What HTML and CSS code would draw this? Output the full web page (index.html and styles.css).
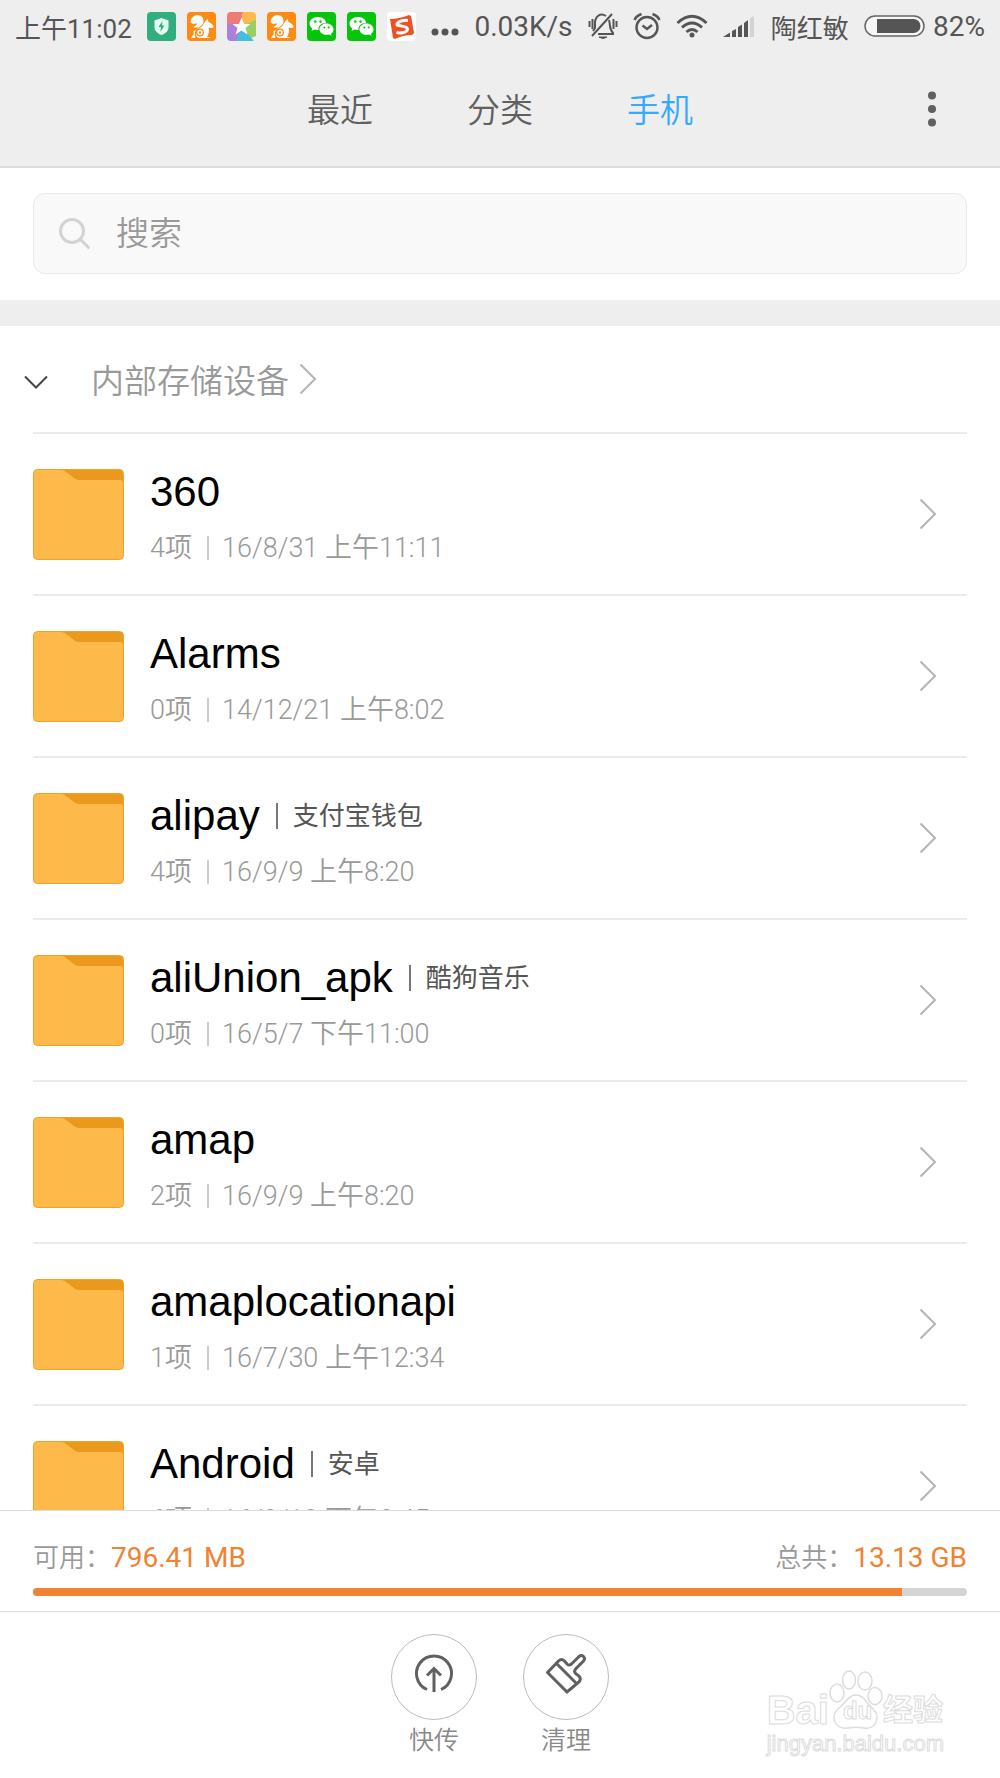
FILE: index.html
```html
<!DOCTYPE html>
<html lang="zh-CN">
  <head>
    <meta charset="UTF-8" />
    <meta name="viewport" content="width=device-width, initial-scale=1.0" />
    <title>文件管理</title>
    <link rel="stylesheet" href="styles.css" />
  </head>
  <body>
    <!-- shared icons -->
    <svg class="sprite" aria-hidden="true">
      <symbol id="folder" viewBox="0 0 91 91">
        <rect x="0.5" y="0.5" width="90" height="90" rx="4" fill="#fdba4a" stroke="#efa22b" />
        <path d="M28 1H87q3 0 3 3V14q0-3-3-3H46q-3 0-5-2L33 3q-2-2-5-2z" fill="#ea991c" />
      </symbol>
      <symbol id="chevron" viewBox="0 0 18 32">
        <path d="M1.500 1.500 16 16 1.500 30.500" fill="none" stroke="#b4b4b4" stroke-width="2" />
      </symbol>
      <symbol id="uc" viewBox="0 0 29 29">
        <rect width="29" height="29" rx="4" fill="#ff8a12" />
        <path d="M3.500 10C4 6 7 3 10.500 3c4 0 6.500 3 6 7-.5 3.500-5 5-7.500 8-1.500 2-1.500 5-.5 8H4c2-2 3.500-5 2.500-7 2-.5 4-2 4.500-4-1.500 1-4 1-5 0 2-.5 4-2 4-4-2 1.500-5 1-6.500-1z" fill="#fff" />
        <path d="M20.500 7l1 3c3 1 5 3 5 5-1 1.500-3 1-5 .5 0 1 1 2.500.5 4.500-.5 2-1 3-2 4.500l4 1.500H13c-4 0-5-4-3.500-6.500C11 16 14 16 16 13c1.500-2.500 2.500-4 4.500-6z" fill="#fff" />
        <circle cx="13" cy="20.500" r="3.300" fill="none" stroke="#ff8a12" stroke-width="1.300" />
        <circle cx="13" cy="20.500" r="1.200" fill="#ff8a12" />
      </symbol>
      <symbol id="wechat" viewBox="0 0 29 29">
        <rect width="29" height="29" rx="4" fill="#06c40b" />
        <path d="M11 5c5 0 8 3 8 6-5 0-8 3-7.500 7-1.500.2-3-.1-4-.4L4.500 19l.8-2.500C3.500 15 2.500 13.500 2.500 11.700 2.500 8 6 5 11 5z" fill="#fff" />
        <path d="M19.500 11.500c4 0 7 2.600 7 5.700 0 2-1 3.500-2.500 4.500l.6 2-2.300-1.200c-6 1.300-9.800-1.800-9.800-5.300 0-3.100 3-5.700 7-5.700z" fill="#fff" />
        <g fill="#06c40b">
          <circle cx="8.300" cy="9.500" r="1.200" /><circle cx="13.500" cy="9.500" r="1.200" />
          <circle cx="17.300" cy="15.500" r="1" /><circle cx="21.700" cy="15.500" r="1" />
        </g>
      </symbol>
    </svg>

    <main>
      <header>
        <div class="statusbar">
          <span class="time">上午11:02</span>
          <div class="apps">
            <svg viewBox="0 0 29 29">
              <rect width="29" height="29" rx="4" fill="#32ae7e" />
              <path d="M14.500 6 21.500 8.500V15c0 4-3 6.500-7 8-4-1.500-7-4-7-8V8.500z" fill="#e4fff2" />
              <path d="M15.500 9 11.500 15h2.500l-.7 5 4.200-6.500H15z" fill="#32ae7e" />
            </svg>
            <svg><use href="#uc" /></svg>
            <svg viewBox="0 0 29 29">
              <clipPath id="tile"><rect width="29" height="29" rx="4" /></clipPath>
              <g clip-path="url(#tile)">
                <path d="M0 0H16L14 14 0 12z" fill="#ef7b78" />
                <path d="M16 0H29V9L14 14z" fill="#fcb94d" />
                <path d="M29 8V24L24 26 14 14z" fill="#98cf60" />
                <path d="M27 29H7L14 14z" fill="#45bddd" />
                <path d="M0 11 14 14 9 29H0z" fill="#ae7fd9" />
              </g>
              <path d="M14.500 5.500 17 12h6.500l-5 4 2 6.500-6-4-6 4 2-6.500-5-4H12z" fill="#fff" />
            </svg>
            <svg><use href="#uc" /></svg>
            <svg><use href="#wechat" /></svg>
            <svg><use href="#wechat" /></svg>
            <svg viewBox="0 0 29 29">
              <rect width="29" height="29" rx="4" fill="#fff" />
              <path d="M3 7q9 0 19-4l2 1 3 17-2 2q-9 0-17 4l-2-1z" fill="#ee4f23" />
              <path d="M21 8.500c-4-.5-10 .5-11 3.500-.7 3 10 1 10.500 5 .3 3.500-7 4.500-11 3.500" fill="none" stroke="#fff" stroke-width="3" />
            </svg>
          </div>
          <svg class="more-apps" viewBox="0 0 28 8" fill="#555">
            <circle cx="4" cy="4" r="3.500" /><circle cx="14" cy="4" r="3.500" /><circle cx="24" cy="4" r="3.500" />
          </svg>
          <span class="speed">0.03K/s</span>
          <svg class="mute" viewBox="0 0 30 28" fill="none" stroke="#555" stroke-width="2">
            <path d="M24 2 4 24M18 4c-6-4-11 1-11 7v5l-2 3M21 8c1.500 5 0 9 4 13v1H10" />
            <path d="M1.500 9v6M4.500 7v10M25.500 7v10M28.500 9v6" />
            <path d="M11 25h8q-4 3-8 0z" fill="#555" stroke-width="1" />
          </svg>
          <svg class="alarm" viewBox="0 0 28 28" fill="none" stroke="#555" stroke-width="2.400">
            <circle cx="14" cy="15.500" r="10.500" />
            <path d="M9.500 13.500 14 17l5-4M1.500 8Q3 4 8.500 2M26.500 8Q25 4 19.500 2" />
          </svg>
          <svg class="wifi" viewBox="0 0 32 24" fill="none" stroke="#555" stroke-width="3">
            <path d="M1.500 9Q16-4.500 30.500 9M6 13.500Q16 4.500 26 13.500M10.500 18Q16 13 21.500 18" />
            <circle cx="16" cy="21" r="2.500" fill="#555" stroke="none" />
          </svg>
          <svg class="signal" viewBox="0 0 32 22" fill="#555">
            <path d="M0 22 7 17.500V22zM9 16l4-2V22H9zM15 12l4-2.500V22H15zM21 8l4-3V22H21z" />
            <path d="M27 3l4-2V22H27z" fill="#d3d3d3" />
          </svg>
          <span class="carrier">陶红敏</span>
          <div class="power">
            <svg class="battery" viewBox="0 0 61 22">
              <rect x="1" y="1" width="59" height="20" rx="10" fill="#f6f6f6" stroke="#666" stroke-width="1.500" />
              <path d="M13 4H49.500a7 7 0 0 1 0 14H13z" fill="#555" />
            </svg>
            <span>82%</span>
          </div>
        </div>
        <nav>
          <button class="tab">最近</button>
          <button class="tab">分类</button>
          <button class="tab valgt">手机</button>
          <button class="menu" aria-label="更多">
            <svg viewBox="0 0 8 36" fill="#606060">
              <circle cx="4" cy="4.500" r="4" /><circle cx="4" cy="18" r="4" /><circle cx="4" cy="31.500" r="4" />
            </svg>
          </button>
        </nav>
      </header>

      <section class="search">
        <label class="search-box">
          <svg viewBox="0 0 32 32" fill="none" stroke="#d3d3d3" stroke-width="3">
            <circle cx="13" cy="13" r="11.500" />
            <path d="M21 21 29.500 29.500" stroke-linecap="round" />
          </svg>
          <input type="text" placeholder="搜索" aria-label="搜索" />
        </label>
      </section>

      <section class="files">
        <div class="path">
          <button class="toggle" aria-label="展开">
            <svg viewBox="0 0 24 14"><path d="M1 1.500 12 12.500 23 1.500" fill="none" stroke="#444" stroke-width="2" /></svg>
          </button>
          <a href="#">内部存储设备 <svg class="chevron"><use href="#chevron" /></svg></a>
        </div>
        <ul class="liste">
          <li>
            <a href="#">
              <svg class="folder"><use href="#folder" /></svg>
              <div class="info">
                <h3>360</h3>
                <p><span>4项</span><span>16/8/31 上午11:11</span></p>
              </div>
              <svg class="chevron"><use href="#chevron" /></svg>
            </a>
          </li>
          <li>
            <a href="#">
              <svg class="folder"><use href="#folder" /></svg>
              <div class="info">
                <h3>Alarms</h3>
                <p><span>0项</span><span>14/12/21 上午8:02</span></p>
              </div>
              <svg class="chevron"><use href="#chevron" /></svg>
            </a>
          </li>
          <li>
            <a href="#">
              <svg class="folder"><use href="#folder" /></svg>
              <div class="info">
                <h3>alipay <small>支付宝钱包</small></h3>
                <p><span>4项</span><span>16/9/9 上午8:20</span></p>
              </div>
              <svg class="chevron"><use href="#chevron" /></svg>
            </a>
          </li>
          <li>
            <a href="#">
              <svg class="folder"><use href="#folder" /></svg>
              <div class="info">
                <h3>aliUnion_apk <small>酷狗音乐</small></h3>
                <p><span>0项</span><span>16/5/7 下午11:00</span></p>
              </div>
              <svg class="chevron"><use href="#chevron" /></svg>
            </a>
          </li>
          <li>
            <a href="#">
              <svg class="folder"><use href="#folder" /></svg>
              <div class="info">
                <h3>amap</h3>
                <p><span>2项</span><span>16/9/9 上午8:20</span></p>
              </div>
              <svg class="chevron"><use href="#chevron" /></svg>
            </a>
          </li>
          <li>
            <a href="#">
              <svg class="folder"><use href="#folder" /></svg>
              <div class="info">
                <h3>amaplocationapi</h3>
                <p><span>1项</span><span>16/7/30 上午12:34</span></p>
              </div>
              <svg class="chevron"><use href="#chevron" /></svg>
            </a>
          </li>
          <li>
            <a href="#">
              <svg class="folder"><use href="#folder" /></svg>
              <div class="info">
                <h3>Android <small>安卓</small></h3>
                <p><span>6项</span><span>16/8/18 下午8:45</span></p>
              </div>
              <svg class="chevron"><use href="#chevron" /></svg>
            </a>
          </li>
        </ul>
      </section>

      <section class="storage">
        <div class="numbers">
          <p>可用：<b>796.41 MB</b></p>
          <p>总共：<b>13.13 GB</b></p>
        </div>
        <div class="bar"><div class="used" style="width: 93%"></div></div>
      </section>

      <footer>
        <button class="action">
          <span class="circle">
            <svg viewBox="0 0 40 40" fill="none" stroke="#606060" stroke-width="3">
              <path d="M13 35.500a17.500 17.500 0 1 1 14 0" />
              <path d="M20 38V15M13 21.500 20 14.500 27 21.500" />
            </svg>
          </span>
          快传
        </button>
        <button class="action">
          <span class="circle">
            <svg viewBox="0 0 40 40" fill="none" stroke="#606060" stroke-width="3">
              <path d="M1.500 18.500 12.500 7q3-3 6 0l2.500 3q2 2 4.500 0L33 2.500q2.500-2 4.500 0t0 4.500L30 14.500q-2.500 2.500-.5 5l3.500 2.500q2.500 3 0 6L21 38z" />
              <path d="M10.500 9.500 30 29" />
            </svg>
          </span>
          清理
        </button>
        <div class="watermark">
          <div class="brand">
            <span>Bai</span>
            <span class="paw">
              <svg viewBox="0 0 54 60" fill="#fff" stroke="#dcdcdc" stroke-width="1.500">
                <ellipse cx="8" cy="23" rx="7" ry="9" />
                <ellipse cx="20" cy="10" rx="6.500" ry="9" />
                <ellipse cx="36" cy="11" rx="7" ry="9" />
                <ellipse cx="46" cy="26" rx="7" ry="8.500" />
                <path d="M27 25c8 0 10 8 16 13 10 8 4 22-8 20-6-1-10-1-16 0C6 60 0 46 10 38c7-5 9-13 17-13z" />
              </svg>
              <i>du</i>
            </span>
            <span class="jy">经验</span>
          </div>
          <p>jingyan.baidu.com</p>
        </div>
      </footer>
    </main>
  </body>
</html>
```

FILE: styles.css
```css
* {
  box-sizing: border-box;
  margin: 0;
  padding: 0;
}

body {
  font-family: Roboto, "Noto Sans CJK SC", sans-serif;
  font-weight: 350;
  color: #999;
  background-color: #fff;
}

main {
  display: flex;
  flex-direction: column;
  height: 100vh;
}

button {
  border: none;
  background: none;
  font: inherit;
  color: inherit;
}

a {
  color: inherit;
  text-decoration: none;
}

svg {
  display: block;
  flex-shrink: 0;
}

.sprite {
  position: absolute;
  width: 0;
  height: 0;
}

.chevron {
  width: 18px;
  height: 32px;
}

/* top */
header {
  background-color: #eee;
  border-bottom: 2px solid #dcdcdc;
}

.statusbar {
  display: flex;
  align-items: center;
  justify-content: space-between;
  height: 52px;
  padding: 0 15px;
  font-size: 28px;
  font-weight: 400;
  color: #555;
}

.time,
.carrier {
  font-size: 26px;
}

.apps {
  display: flex;
  gap: 11px;
}

.apps svg {
  width: 29px;
  height: 29px;
}

.more-apps {
  width: 28px;
  height: 8px;
  margin-top: 12px;
}

.mute {
  width: 30px;
  height: 28px;
}

.alarm {
  width: 28px;
  height: 28px;
}

.wifi {
  width: 32px;
  height: 24px;
}

.signal {
  width: 32px;
  height: 22px;
}

.power {
  display: flex;
  align-items: center;
  gap: 8px;
}

.battery {
  width: 61px;
  height: 22px;
}

nav {
  position: relative;
  display: flex;
  justify-content: center;
  height: 114px;
}

.tab {
  width: 160px;
  padding-bottom: 2px;
  font-size: 33px;
  color: #606060;
}

.valgt {
  color: #33a9ff;
}

.menu {
  position: absolute;
  top: 0;
  right: 48px;
  width: 40px;
  height: 114px;
}

.menu svg {
  width: 8px;
  height: 36px;
  margin: 0 auto;
}

.search {
  padding: 25px 33px 26px;
  border-bottom: 26px solid #eee;
}

.search-box {
  display: flex;
  align-items: center;
  gap: 25px;
  height: 81px;
  padding: 0 25px;
  border: 1px solid #e8e8e8;
  border-radius: 12px;
  background-color: #f9f9f9;
}

.search-box svg {
  width: 32px;
  height: 32px;
}

.search-box input {
  flex: 1;
  border: none;
  outline: none;
  background: none;
  font: inherit;
  font-size: 33px;
}

.search-box input::placeholder {
  color: #999;
}

/* files */
.files {
  flex: 1;
  min-height: 0;
  overflow: hidden;
  padding: 0 33px;
}

.path {
  display: flex;
  align-items: center;
  gap: 43px;
  height: 106px;
  font-size: 33px;
}

.toggle {
  margin-left: -9px;
  padding-top: 6px;
}

.toggle svg {
  width: 24px;
  height: 14px;
}

.path a {
  display: flex;
  align-items: center;
  gap: 10px;
}

.liste {
  list-style: none;
}

.liste li {
  border-top: 2px solid #ebebeb;
}

.liste a {
  display: flex;
  align-items: center;
  gap: 26px;
  height: 160px;
  padding-right: 30px;
}

.folder {
  width: 91px;
  height: 91px;
}

.info {
  flex: 1;
  padding-top: 12px;
}

.info h3 {
  display: flex;
  align-items: center;
  height: 56px;
  font-family: "Liberation Sans", "Noto Sans CJK SC", sans-serif;
  font-size: 42px;
  font-weight: 400;
  color: #000;
}

.info small {
  margin-left: 16px;
  padding-left: 15px;
  line-height: 26px;
  font-size: 26px;
  color: #555;
  border-left: 2px solid #777;
}

.info p {
  display: flex;
  align-items: center;
  height: 56px;
  line-height: 24px;
  font-size: 27px;
}

.info p span + span {
  margin-left: 15px;
  padding-left: 13px;
  border-left: 2px solid #ccc;
}

/* bottom */
.storage {
  padding: 27px 33px 15px;
  border-top: 1px solid #dcdcdc;
}

.numbers {
  display: flex;
  justify-content: space-between;
  height: 50px;
  line-height: 40px;
  font-size: 26px;
}

.numbers b {
  font-size: 28px;
  font-weight: 400;
  color: #f08232;
}

.bar {
  height: 8px;
  border-radius: 4px;
  overflow: hidden;
  background-color: #d4d4d4;
}

.used {
  height: 100%;
  background-color: #f08232;
}

footer {
  position: relative;
  display: flex;
  justify-content: center;
  gap: 46px;
  height: 167px;
  padding-top: 22px;
  border-top: 1px solid #dcdcdc;
}

.action {
  display: flex;
  flex-direction: column;
  align-items: center;
  font-size: 25px;
  color: #888;
}

.circle {
  display: flex;
  align-items: center;
  justify-content: center;
  width: 86px;
  height: 86px;
  padding-bottom: 6px;
  border: 1px solid #bbb;
  border-radius: 50%;
}

.circle svg {
  width: 40px;
  height: 40px;
}

.watermark {
  position: absolute;
  right: 56px;
  bottom: 20px;
  font-family: "Liberation Sans", "Noto Sans CJK SC", sans-serif;
  color: #fff;
  -webkit-text-stroke: 1px #dcdcdc;
}

.brand {
  display: flex;
  align-items: flex-end;
  height: 62px;
  line-height: 40px;
  font-size: 40px;
  font-weight: 700;
}

.paw {
  position: relative;
}

.paw svg {
  width: 54px;
  height: 60px;
}

.paw i {
  position: absolute;
  left: 14px;
  bottom: 6px;
  line-height: 26px;
  font-size: 24px;
  font-style: normal;
}

.jy {
  font-size: 30px;
}

.watermark p {
  line-height: 28px;
  font-size: 22px;
}
```
